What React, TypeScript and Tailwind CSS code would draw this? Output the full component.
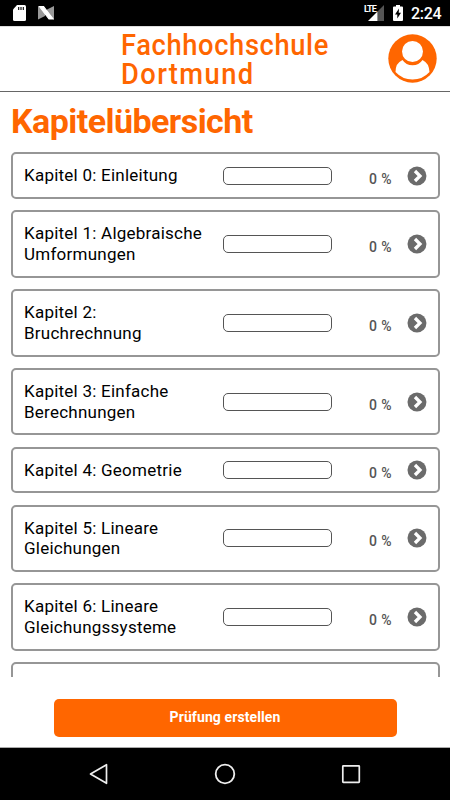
const chapters = [
  "Kapitel 0: Einleitung",
  "Kapitel 1: Algebraische Umformungen",
  "Kapitel 2: Bruchrechnung",
  "Kapitel 3: Einfache Berechnungen",
  "Kapitel 4: Geometrie",
  "Kapitel 5: Lineare Gleichungen",
  "Kapitel 6: Lineare Gleichungssysteme",
].map((name) => ({ name, progress: 0 }));

function StatusBar() {
  return (
    <div className="h-[26px] shrink-0 bg-black flex items-center text-white">
      <svg className="ml-[13px]" width="13" height="16" viewBox="0 0 13 16">
        <path d="M4 0h7.5Q13 0 13 1.5v13q0 1.5-1.5 1.5h-10Q0 16 0 14.500V4.500z" fill="#fff" />
        <path d="M5.700 2v3M8 2v3M10.300 2v3" stroke="#000" strokeWidth="1.100" />
      </svg>
      <svg className="ml-3" width="16" height="14" viewBox="0 0 16 14">
        <path d="M0 0l7 4.500V10L0 13.500zM16 0v13.500L9 9V3.500z" fill="#999" />
        <path d="M1.500 0.500H5.500L15 13h-4z" fill="#fff" stroke="#fff" strokeWidth="1.200" />
      </svg>
      <div className="relative ml-auto w-5 h-4">
        <svg className="absolute left-1 top-0" width="16" height="16" viewBox="0 0 16 16">
          <path d="M16 0v16H9.500V6.500z" fill="#555" />
          <path d="M9.500 6.500V16H0z" fill="#fff" />
        </svg>
        <span className="absolute left-0 top-0 font-bold text-[9px] leading-[9px] tracking-[-0.9px]">LTE</span>
      </div>
      <svg className="ml-[9px]" width="10" height="16" viewBox="0 0 10 16">
        <path d="M3 0h4v1.500h2q1 0 1 1V15q0 1-1 1H1q-1 0-1-1V2.500q0-1 1-1h2z" fill="#fff" />
        <path d="M6 3.500L2 9.500h2.300v4L8 7.700H5.700z" fill="#000" />
      </svg>
      <span className="ml-2 mr-2 w-[31px] text-[16px] leading-4 font-medium tracking-[-0.3px] whitespace-nowrap pt-[2px]">2:24</span>
    </div>
  );
}

function Header() {
  return (
    <header className="h-[66px] shrink-0 flex border-t border-t-[#ddd] border-b border-b-[#666]">
      <div className="ml-[121px] pt-[3px] w-[209px] text-[30px] leading-[29px] font-medium text-[#ff6600] whitespace-nowrap origin-left scale-x-[0.91]">
        <div className="tracking-[0.7px]">Fachhochschule</div>
        <div className="tracking-[1.55px]">Dortmund</div>
      </div>
      <svg className="ml-[58px] mt-[7px]" width="49" height="49" viewBox="0 0 49 49">
        <circle cx="24.500" cy="24.500" r="24.200" fill="#ff6600" />
        <path d="M14.500 26Q7.500 29 7.500 38Q14.500 45.600 24.500 45.600T41.500 38Q41 29 34.500 26Q31 31.300 24.500 31.300T14.500 26z" fill="#fff" />
        <circle cx="24.500" cy="17.500" r="10.500" fill="#fff" />
      </svg>
    </header>
  );
}

function ChapterCard({ name, progress }: { name: string; progress: number }) {
  return (
    <button className="w-full shrink-0 flex items-center text-left border-2 border-[#969696] rounded-[5px] p-[11px]">
      <span className="w-[181px] text-[17px] leading-[20.75px] tracking-[0.24px] text-black">{name}</span>
      <span className="ml-[18px] w-[110px] h-[18px] rounded-[5px] border border-[#555] overflow-hidden">
        <span className="block h-full bg-[#ff6600]" style={{ width: `${progress}%` }} />
      </span>
      <span className="w-[60px] pt-[6px] text-right text-[14px] leading-[14px] font-medium tracking-[0.4px] text-[#555]">{progress} %</span>
      <svg className="ml-[15px]" width="20" height="20" viewBox="0 0 20 20">
        <circle cx="10" cy="10" r="9.500" fill="#6b6b6b" />
        <path d="M8 5l5 5-5 5" fill="none" stroke="#fff" strokeWidth="3.300" />
      </svg>
    </button>
  );
}

function NavBar() {
  return (
    <nav className="h-[53px] shrink-0 bg-black border-t border-[#aaa] flex items-center justify-between pl-[88px] pr-[88px]">
      <svg width="22" height="22" viewBox="0 0 22 22" fill="none" stroke="#eee" strokeWidth="1.700" strokeLinejoin="round">
        <path d="M18.500 1.700v18.600L2.500 11z" />
      </svg>
      <svg width="22" height="22" viewBox="0 0 22 22" fill="none" stroke="#eee" strokeWidth="1.800">
        <circle cx="11" cy="11" r="9.300" />
      </svg>
      <svg width="22" height="22" viewBox="0 0 22 22" fill="none" stroke="#eee" strokeWidth="1.700">
        <rect x="2.800" y="2.800" width="16.500" height="16.500" rx="0.500" />
      </svg>
    </nav>
  );
}

export default function App() {
  return (
    <div className="w-[450px] h-[800px] bg-white flex flex-col overflow-hidden font-['Roboto',sans-serif]">
      <StatusBar />
      <Header />
      <h1 className="ml-[11px] mt-[9px] mb-[11.25px] h-10 leading-10 text-[34px] font-bold text-[#ff6600] tracking-[-0.55px]">Kapitelübersicht</h1>
      <main className="h-[524.75px] shrink-0 overflow-hidden flex flex-col gap-[11.25px] pl-[11px] pr-[10px]">
        {chapters.map((chapter) => (
          <ChapterCard key={chapter.name} name={chapter.name} progress={chapter.progress} />
        ))}
        <div className="h-[67.5px] shrink-0 border-2 border-[#969696] rounded-[5px]" />
      </main>
      <div className="grow flex items-start justify-center pt-[22px]">
        <button className="w-[343px] h-[38px] rounded-[5px] bg-[#ff6600] text-white text-[14px] font-bold tracking-[0.1px] pb-[2px]">Prüfung erstellen</button>
      </div>
      <NavBar />
    </div>
  );
}
